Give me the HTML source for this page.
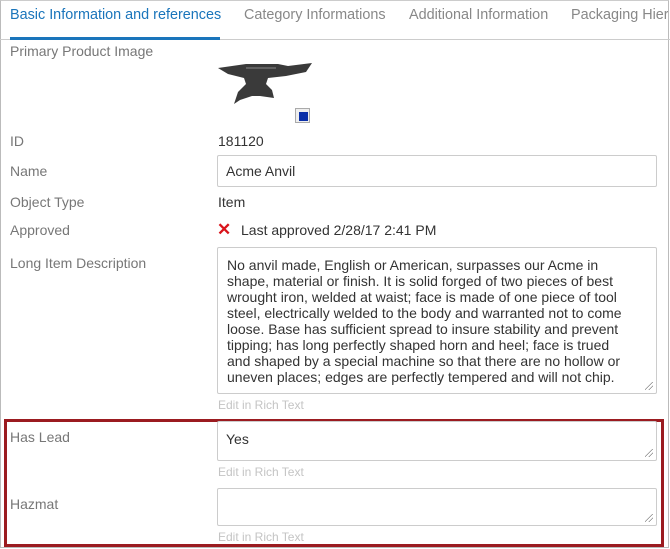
<html><head><style>
body{margin:0;width:670px;height:549px;background:#fff;font-family:"Liberation Sans",sans-serif;position:relative;overflow:hidden}
.a{position:absolute;white-space:nowrap}
.l{font-size:14px;color:#777;left:10px}
.v{font-size:14px;color:#333;left:218px}
.box{position:absolute;left:217px;width:440px;border:1px solid #ccc;border-radius:2px;background:#fff;box-sizing:border-box}
.e{font-size:12px;color:#c4c4c4;left:218px}
.g{position:absolute;right:3px;bottom:3px;width:8px;height:8px;background:linear-gradient(135deg,transparent 45%,#888 46%,#888 52%,transparent 53%,transparent 70%,#888 71%,#888 77%,transparent 78%)}
</style></head><body>
<div style="position:absolute;left:0;top:0;border:1px solid #bbb;border-top:1px solid #ccc;box-sizing:border-box;width:669px;height:548px"></div>
<div style="position:absolute;left:0;top:39px;width:670px;height:1px;background:#ccc"></div>
<div style="position:absolute;left:10px;top:37px;width:210px;height:3px;background:#1a75bb"></div>
<div style="position:absolute;left:0;top:0;width:668px;height:36px;overflow:hidden">
<div class="a" style="left:10px;top:7px;font-size:14.4px;color:#1a75bb">Basic Information and references</div>
<div class="a" style="left:244px;top:7px;font-size:14.4px;color:#888">Category Informations</div>
<div class="a" style="left:409px;top:7px;font-size:14.4px;color:#888">Additional Information</div>
<div class="a" style="left:571px;top:7px;font-size:14.4px;color:#888">Packaging Hierarchy</div>
</div>
<div class="a l" style="top:43px">Primary Product Image</div>
<svg class="a" style="left:216px;top:60px" width="100" height="50"><path d="M2 8 L30 4 L62 4 L72 6 L96 3 L90 12 L70 16 L52 18 L50 24 L56 30 L58 38 L44 36 L36 36 L24 40 L18 44 L22 32 L30 24 L28 18 L12 14 Z" fill="#3a3a3a"/><path d="M30 8 L60 8" stroke="#888" stroke-width="1"/></svg>
<div class="a" style="left:295px;top:108px;width:15px;height:15px;border:1px solid #aaa;box-sizing:border-box;background:#eee"><div style="position:absolute;left:3px;top:3px;width:9px;height:9px;background:#0a2fa8"></div></div>
<div class="a l" style="top:133px">ID</div><div class="a v" style="top:133px">181120</div>
<div class="a l" style="top:163px">Name</div>
<div class="box" style="top:155px;height:32px"><div class="a" style="left:8px;top:7px;font-size:14px;color:#333">Acme Anvil</div></div>
<div class="a l" style="top:194px">Object Type</div><div class="a v" style="top:194px">Item</div>
<div class="a l" style="top:222px">Approved</div>
<div class="a" style="left:217px;top:220px;font-size:17px;font-weight:bold;color:#d9141b">✕</div>
<div class="a v" style="left:241px;top:222px">Last approved 2/28/17 2:41 PM</div>
<div class="a l" style="top:255px">Long Item Description</div>
<div class="box" style="top:247px;height:147px"><div style="position:absolute;left:9px;top:9px;width:395px;font-size:14px;line-height:16px;color:#333">No anvil made, English or American, surpasses our Acme in shape, material or finish. It is solid forged of two pieces of best wrought iron, welded at waist; face is made of one piece of tool steel, electrically welded to the body and warranted not to come loose. Base has sufficient spread to insure stability and prevent tipping; has long perfectly shaped horn and heel; face is trued and shaped by a special machine so that there are no hollow or uneven places; edges are perfectly tempered and will not chip.</div><div class="g"></div></div>
<div class="a e" style="top:398px">Edit in Rich Text</div>
<div style="position:absolute;left:4px;top:419px;width:660px;height:128px;border:3px solid #9b1b20;box-sizing:border-box"></div>
<div class="a l" style="top:429px">Has Lead</div>
<div class="box" style="top:421px;height:40px"><div class="a" style="left:8px;top:9px;font-size:14px;color:#333">Yes</div><div class="g"></div></div>
<div class="a e" style="top:465px">Edit in Rich Text</div>
<div class="a l" style="top:496px">Hazmat</div>
<div class="box" style="top:488px;height:38px"><div class="g"></div></div>
<div class="a e" style="top:530px">Edit in Rich Text</div>
</body></html>
